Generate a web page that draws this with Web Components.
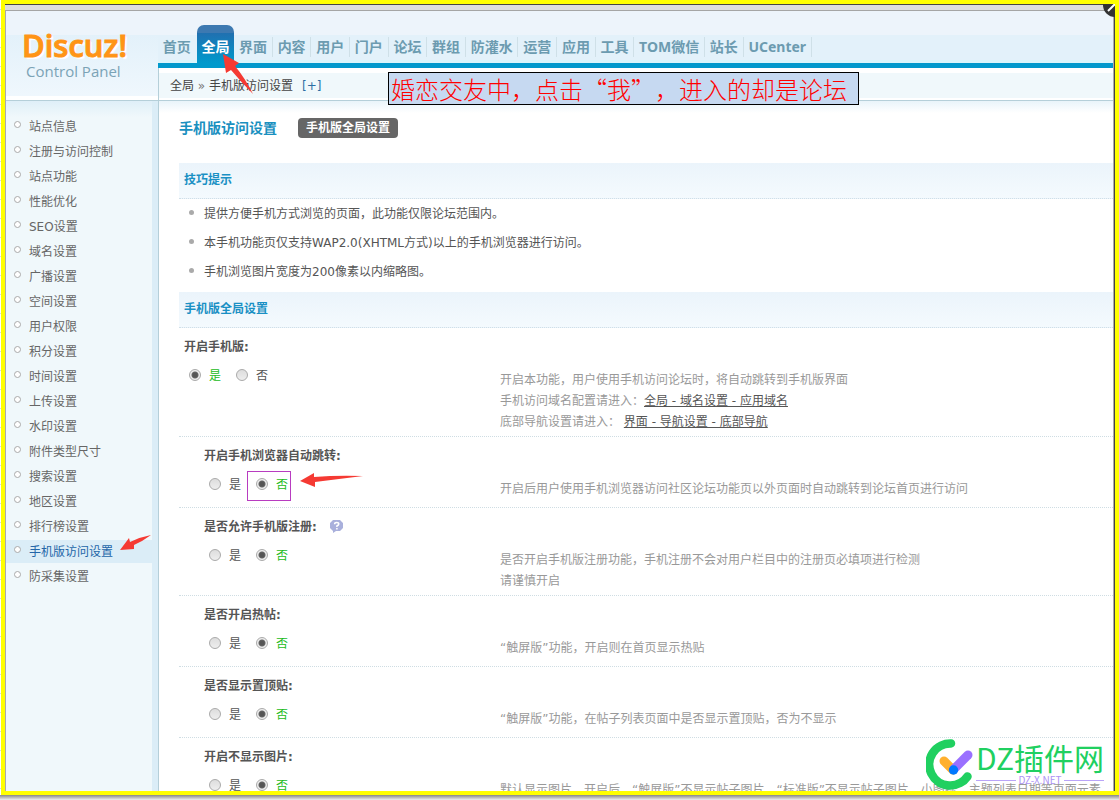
<!DOCTYPE html>
<html lang="zh-CN">
<head>
<meta charset="utf-8">
<title>Discuz! Control Panel</title>
<style>
html,body{margin:0;height:100%}
body{font:12px/21px "DejaVu Sans","Noto Sans CJK SC",sans-serif;color:#555;overflow:hidden;background:#fff}
</style>
</head>
<body>
<app-shell>
  <brand-logo slot="logo"></brand-logo>
  <top-nav slot="nav" items="首页,全局,界面,内容,用户,门户,论坛,群组,防灌水,运营,应用,工具,TOM微信,站长,UCenter" active="全局"></top-nav>
  <bread-crumb slot="crumb"></bread-crumb>
  <side-menu slot="menu" items="站点信息,注册与访问控制,站点功能,性能优化,SEO设置,域名设置,广播设置,空间设置,用户权限,积分设置,时间设置,上传设置,水印设置,附件类型尺寸,搜索设置,地区设置,排行榜设置,手机版访问设置,防采集设置" active="手机版访问设置"></side-menu>
  <page-title>手机版访问设置<span slot="tab">手机版全局设置</span></page-title>
  <section-bar>技巧提示</section-bar>
  <tip-list items="提供方便手机方式浏览的页面，此功能仅限论坛范围内。|本手机功能页仅支持WAP2.0(XHTML方式)以上的手机浏览器进行访问。|手机浏览图片宽度为200像素以内缩略图。"></tip-list>
  <section-bar>手机版全局设置</section-bar>
  <setting-row label="开启手机版:" value="1">开启本功能，用户使用手机访问论坛时，将自动跳转到手机版界面<br>手机访问域名配置请进入：<a href="#domain">全局 - 域名设置 - 应用域名</a><br>底部导航设置请进入： <a href="#nav">界面 - 导航设置 - 底部导航</a></setting-row>
  <setting-row sub marked label="开启手机浏览器自动跳转:" value="0">开启后用户使用手机浏览器访问社区论坛功能页以外页面时自动跳转到论坛首页进行访问</setting-row>
  <setting-row sub help label="是否允许手机版注册:" value="0">是否开启手机版注册功能，手机注册不会对用户栏目中的注册页必填项进行检测<br>请谨慎开启</setting-row>
  <setting-row sub label="是否开启热帖:" value="0">“触屏版”功能，开启则在首页显示热贴</setting-row>
  <setting-row sub label="是否显示置顶贴:" value="0">“触屏版”功能，在帖子列表页面中是否显示置顶贴，否为不显示</setting-row>
  <setting-row sub label="开启不显示图片:" value="0">默认显示图片，开启后，“触屏版”不显示帖子图片，“标准版”不显示帖子图片、小图标、主题列表日期等页面元素</setting-row>
</app-shell>
<note-layer>婚恋交友中，点击“我”，进入的却是论坛</note-layer>
<site-mark></site-mark>

<script>
class Base extends HTMLElement {
  connectedCallback() {
    if (!this.shadowRoot) this.attachShadow({mode: 'open'}).innerHTML = this.view();
  }
  list(sep = ',') { return this.getAttribute('items').split(sep); }
}

customElements.define('app-shell', class extends Base {
  view() { return `<style>
:host{display:block;box-sizing:border-box;height:100vh;padding:0 0 5px 1px;
  background:linear-gradient(#888,#eee) bottom/100% 5px no-repeat,repeating-linear-gradient(#fff 0 9px,#d5dbe8 9px 10px,#fff 10px 19px)}
.frame{box-sizing:border-box;height:100%;border:4px solid #ff0;display:flex;flex-direction:column;overflow:hidden}
.chrome{flex:none;height:5px;background:#ddd;border-top:1px solid #444;border-bottom:1px solid #a5a5a5}
.app{flex:1;min-height:0;border-left:1px solid #aaa;border-right:1px solid #444;box-shadow:inset -1px 0 #aaa;
  display:grid;grid-template:90px 1fr/152px 1fr;background:#fff}
.logo{background:linear-gradient(#edf4fb 0 24px,#e3f1fa 24px,#eff7fd 85px,#fff 85px);border-bottom:1px solid #b5cfd9}
.head{display:flex;flex-direction:column;margin-right:1px;border-bottom:1px solid #b5cfd9;min-width:0}
.nav{height:52px;border-bottom:5px solid #0099cc;background:linear-gradient(#edf4fb 0 24px,#e3f1fa 24px 49px,#daf5fb 49px)}
.crumb{flex:1;border-left:1px solid #b5cfd9;background:linear-gradient(#fff 0 5px,#f0f8fb 5px 30px,#fff 30px)}
.side{min-height:0;border-right:6px solid #dbedf7;background:linear-gradient(#dfeff8,#f0f8fb 16px)}
.side{margin-right:0;box-sizing:border-box;width:152px}
main{min-height:0;min-width:0;margin-right:1px;overflow:hidden;border-left:1px solid #b5cfd9;padding-left:20px;background:linear-gradient(#e9f4fa,#fff 12px)}
</style>
<div class="frame"><div class="chrome"></div><div class="app">
<div class="logo"><slot name="logo"></slot></div>
<header class="head"><div class="nav"><slot name="nav"></slot></div><div class="crumb"><slot name="crumb"></slot></div></header>
<div class="side"><slot name="menu"></slot></div>
<main><slot></slot></main></div></div>`; }
});

customElements.define('brand-logo', class extends Base {
  view() { return `<style>
:host{display:block;padding:16px 0 0 16px;font-family:"Open Sans","Noto Sans",sans-serif}
b{display:block;font-size:31px;line-height:36px;font-weight:600;color:#ff9416;text-shadow:1px 1px #fff,2px 2px 1px #fff;-webkit-text-stroke:1px #ff9416}
span{display:block;padding-left:4px;font-size:15px;line-height:16px;color:#7ba3b6}
</style><b>Discuz!</b><span>Control Panel</span>`; }
});

customElements.define('top-nav', class extends Base {
  view() { return `<style>
:host{display:block;height:100%}
nav{display:flex;height:100%;max-width:654px;align-items:flex-end}
a{flex:1 1 auto;text-align:center;white-space:nowrap;text-decoration:none;color:#6c9bb0;border-right:1px solid #cfe0e8;
  font:bold 14px/20px "Noto Sans","Noto Sans CJK SC",sans-serif;margin-bottom:6px}
a.pre{border-color:transparent}
a.on{margin:0 0 -5px;padding:12px 0 11px;border:0;border-radius:7px 7px 0 0;color:#fff;position:relative;background:linear-gradient(#3d79b1 0 8px,#2070b0 8px,#0099cc 38px)}
</style><nav>${this.list().map((t, i, all) => `<a href="#" class="${t === this.getAttribute('active') ? 'on' : all[i + 1] === this.getAttribute('active') ? 'pre' : ''}">${t}</a>`).join('')}</nav>`; }
});

customElements.define('bread-crumb', class extends Base {
  view() { return `<style>
:host{display:block;padding:8px 0 0 11px;color:#444}
a{color:#2d6ea3;text-decoration:none;margin-left:9px}
i{font-style:normal;color:#777}
</style>全局 <i>»</i> 手机版访问设置<a href="#add">[+]</a>`; }
});

customElements.define('side-menu', class extends Base {
  view() { return `<style>
:host{display:block}
ul{margin:0;padding:14px 0 0;list-style:none;display:grid;gap:2px}
a{display:flex;gap:8px;padding:1px 0 0 8px;line-height:22px;color:#666;text-decoration:none}
a::before{content:"";box-sizing:border-box;width:7px;height:7px;margin-top:5px;border:1px solid #aaa;border-radius:50%;background:#fff}
.on{background:#dbedf7;color:#2366a8}
</style><ul>${this.list().map(t => `<li><a href="#"${t === this.getAttribute('active') ? ' class="on"' : ''}>${t}</a></li>`).join('')}</ul>`; }
});

customElements.define('page-title', class extends Base {
  view() { return `<style>
:host{display:block}
div{display:flex;align-items:center;gap:21px;height:54px;padding-bottom:8px}
h1{margin:0;font-size:14px;line-height:20px;color:#1a90bf}
button{height:20px;border:0;border-radius:4px;padding:0 8px;background:#666;color:#fff;font:bold 12px/20px "DejaVu Sans","Noto Sans CJK SC",sans-serif}
</style><div><h1><slot></slot></h1><button type="button"><slot name="tab"></slot></button></div>`; }
});

customElements.define('section-bar', class extends Base {
  view() { return `<style>
:host{display:block}
h2{margin:0;padding-left:5px;font-size:12px;line-height:35px;color:#1a90c4;background:linear-gradient(#ebf4fb,#f4fafe);border-bottom:1px dotted #d0dfe8}
</style><h2><slot></slot></h2>`; }
});

customElements.define('tip-list', class extends Base {
  view() { return `<style>
:host{display:block}
ul{margin:0;padding:1px 0 5px 10px;list-style:none}
li{display:flex;gap:10px;line-height:29px}
li::before{content:"";width:5px;height:5px;margin-top:10px;border-radius:50%;background:#aaa}
</style><ul>${this.list('|').map(t => `<li>${t}</li>`).join('')}</ul>`; }
});

customElements.define('setting-row', class extends Base {
  view() {
    const v = this.getAttribute('value');
    const opt = (val, text) => `<label${this.hasAttribute('marked') && v === val ? ' class="mark"' : ''}><input type="radio" name="r" value="${val}"${v === val ? ' checked' : ''}><span>${text}</span></label>`;
    return `<style>
:host{display:block}
fieldset{margin:0;padding:0;border:0;border-bottom:1px dotted #cfdde3;display:grid;grid-template:38px minmax(32px,auto)/321px 1fr}
.name{grid-column:1/3;padding-left:5px;line-height:38px;font-weight:bold;color:#555;display:flex;align-items:center;gap:13px}
.opts{display:flex;gap:15px;padding-left:10px}
:host([sub]) .name{padding-left:25px}
:host([sub]) .opts{padding-left:30px}
label{display:flex;gap:8px;height:20px;line-height:20px;align-items:center;position:relative}
input{appearance:none;box-sizing:border-box;width:12px;height:12px;margin:0 0 2px;border:1px solid #aaa;border-radius:50%;background:linear-gradient(#ddd,#eee)}
input:checked{background:radial-gradient(circle,#555 0 2px,#666 3px,#eee 4px)}
input:checked+span{color:#2b2}
.mark::before{content:"";position:absolute;inset:-4px -3px -6px -9px;border:1px solid #b83cc0}
.help{padding:4px 0 3px;color:#999;white-space:nowrap}
::slotted(a){color:#555}
</style><fieldset aria-label="${this.getAttribute('label')}">
<div class="name">${this.getAttribute('label')}${this.hasAttribute('help') ? '<svg width="14" height="14" viewBox="0 0 14 14"><path d="M3 0h7l3 3v5l-3 3H6l-3 2v-2L0 8V3z" fill="#a9b0dc"/><path d="M4.600 4.200q0-1.700 2-1.700 2.200 0 2.200 1.500 0 1-1.900 2v.9M6.900 8v1.400" stroke="#fff" stroke-width="1.500" fill="none"/></svg>' : ''}</div>
<div class="opts">${opt('1', '是')}${opt('0', '否')}</div><div class="help"><slot></slot></div></fieldset>`;
  }
});

customElements.define('note-layer', class extends Base {
  view() { return `<style>
:host{display:block}
p{position:absolute;left:388px;top:72px;margin:0;padding:0 11px 0 2px;border:1px solid #000;background:#c6d9f1;color:#f00;font:300 24px/31px "Noto Sans CJK SC",sans-serif;text-spacing-trim:space-all;white-space:nowrap}
svg{position:absolute;left:0;top:0;pointer-events:none}
</style><svg width="400" height="600" viewBox="0 0 400 600" fill="#f53a33">
<path d="M223 54l16 9-4 3q10 12 18 28-11-11-22-24l-5 3z"/>
<path d="M300 481l14-8v4q24-2 49-1-24 3-48 6v5z"/>
<path d="M120 550l9-12 1 4q10-5 21-7-8 6-17 10v4z"/></svg>
<svg style="left:auto;right:4px;top:4px" width="13" height="13"><circle cx="13" cy="1" r="12" fill="#333"/><path d="M6 7l7-7" stroke="#fff" stroke-width="2"/></svg>
<p><slot></slot></p>`; }
});

customElements.define('site-mark', class extends Base {
  view() { return `<style>
:host{position:absolute;right:15px;bottom:9px;display:flex;gap:2px;font-family:"Noto Sans CJK SC",sans-serif}
.t{display:flex;flex-direction:column}
b{font-weight:400;font-size:30px;line-height:36px;color:#20d060;white-space:nowrap}
small{display:flex;align-items:center;gap:2px;font-size:10px;line-height:10px;color:#ad93f5}
small::before,small::after{content:"";flex:1;height:1px;background:#b9a4f8}
</style><svg width="48" height="52" viewBox="0 0 48 52" fill="none" stroke-linecap="round">
<path d="M25 4.500a21 21 0 1 0 16.500 33" stroke="#20d060" stroke-width="8.500"/>
<path d="M18 22l9 9" stroke="#ffb02e" stroke-width="9"/><path d="M28 30l14-14" stroke="#9a70ff" stroke-width="9"/>
<circle cx="27.500" cy="31" r="4.700" fill="#0078ff"/></svg>
<div class="t"><b>DZ插件网</b><small>DZ-X.NET</small></div>`; }
});
</script>
</body>
</html>
